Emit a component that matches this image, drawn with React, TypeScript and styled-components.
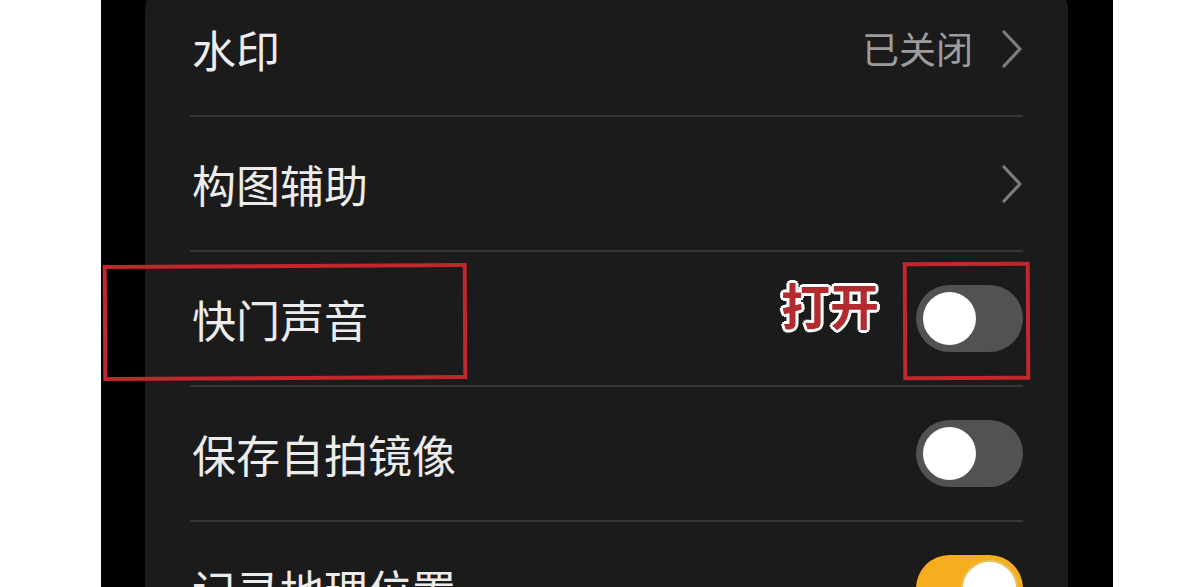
import styled, { createGlobalStyle } from "styled-components";

const GlobalStyle = createGlobalStyle`
  html, body {
    margin: 0;
    padding: 0;
    background: #ffffff;
  }
  body {
    font-family: "Noto Sans CJK SC", "Noto Sans", sans-serif;
  }
`;

const Page = styled.div`
  position: relative;
  width: 1200px;
  height: 587px;
  overflow: hidden;
  background: #ffffff;
`;

const Phone = styled.div`
  display: flow-root;
  margin-left: 101px;
  width: 1012px;
  height: 100%;
  background: #000;
  padding: 0 45px 0 44px;
  box-sizing: border-box;
`;

const Card = styled.div`
  margin-top: -18px;
  background: #1b1b1b;
  border-radius: 28px;
  padding: 0 45px;
`;

const Row = styled.div`
  height: 135px;
  box-sizing: border-box;
  display: flex;
  align-items: center;
  justify-content: space-between;
  padding-left: 2px;
  border-bottom: 2px solid #363636;
`;

const Label = styled.span`
  font-size: 44px;
  color: #ececec;
  line-height: 1;
`;

const Trail = styled.div`
  display: flex;
  align-items: center;
  gap: 28px;
`;

const Value = styled.span`
  font-size: 37px;
  color: #9c9c9c;
  line-height: 1;
`;

const Track = styled.div<{ $on?: boolean }>`
  width: 107px;
  height: 67px;
  border-radius: 34px;
  background: ${(p) => (p.$on ? "#f4ae1e" : "#525252")};
  display: flex;
  align-items: center;
  justify-content: ${(p) => (p.$on ? "flex-end" : "flex-start")};
  padding: 0 7px;
  box-sizing: border-box;
`;

const Knob = styled.div<{ $on?: boolean }>`
  width: 53px;
  height: 53px;
  border-radius: 50%;
  background: #fff;
  box-shadow: ${(p) => (p.$on ? "0 0 0 2px #e2c46a" : "none")};
`;

const Mark = styled.div<{ $x: number; $y: number; $w: number; $h: number }>`
  position: absolute;
  left: ${(p) => p.$x}px;
  top: ${(p) => p.$y}px;
  width: ${(p) => p.$w}px;
  height: ${(p) => p.$h}px;
  border: 4px solid #c4262d;
  box-sizing: border-box;
  transform: rotate(-0.3deg);
`;

const Note = styled.span`
  position: absolute;
  left: 781px;
  top: 279px;
  font-size: 49px;
  font-weight: 700;
  line-height: 1;
  color: #b32a2f;
  text-shadow:
    -3px 0 0 #fff, 3px 0 0 #fff, 0 -3px 0 #fff, 0 3px 0 #fff,
    -2px -2px 0 #fff, 2px -2px 0 #fff, -2px 2px 0 #fff, 2px 2px 0 #fff;
`;

const Chevron = () => (
  <svg width="22" height="38" viewBox="0 0 22 38">
    <polyline
      points="3,2 19,19 3,36"
      fill="none"
      stroke="#7c7c7c"
      strokeWidth="3.2"
      strokeLinecap="round"
      strokeLinejoin="round"
    />
  </svg>
);

const Toggle = ({ on }: { on?: boolean }) => (
  <Track $on={on}>
    <Knob $on={on} />
  </Track>
);

export default function App() {
  return (
    <>
      <GlobalStyle />
      <Page>
        <Phone>
          <Card>
            <Row>
              <Label>水印</Label>
              <Trail>
                <Value>已关闭</Value>
                <Chevron />
              </Trail>
            </Row>
            <Row>
              <Label>构图辅助</Label>
              <Trail>
                <Chevron />
              </Trail>
            </Row>
            <Row>
              <Label>快门声音</Label>
              <Toggle />
            </Row>
            <Row>
              <Label>保存自拍镜像</Label>
              <Toggle />
            </Row>
            <Row>
              <Label>记录地理位置</Label>
              <Toggle on />
            </Row>
          </Card>
        </Phone>
        <Mark $x={103} $y={264} $w={364} $h={116} />
        <Mark $x={903} $y={262} $w={127} $h={118} />
        <Note>打开</Note>
      </Page>
    </>
  );
}
